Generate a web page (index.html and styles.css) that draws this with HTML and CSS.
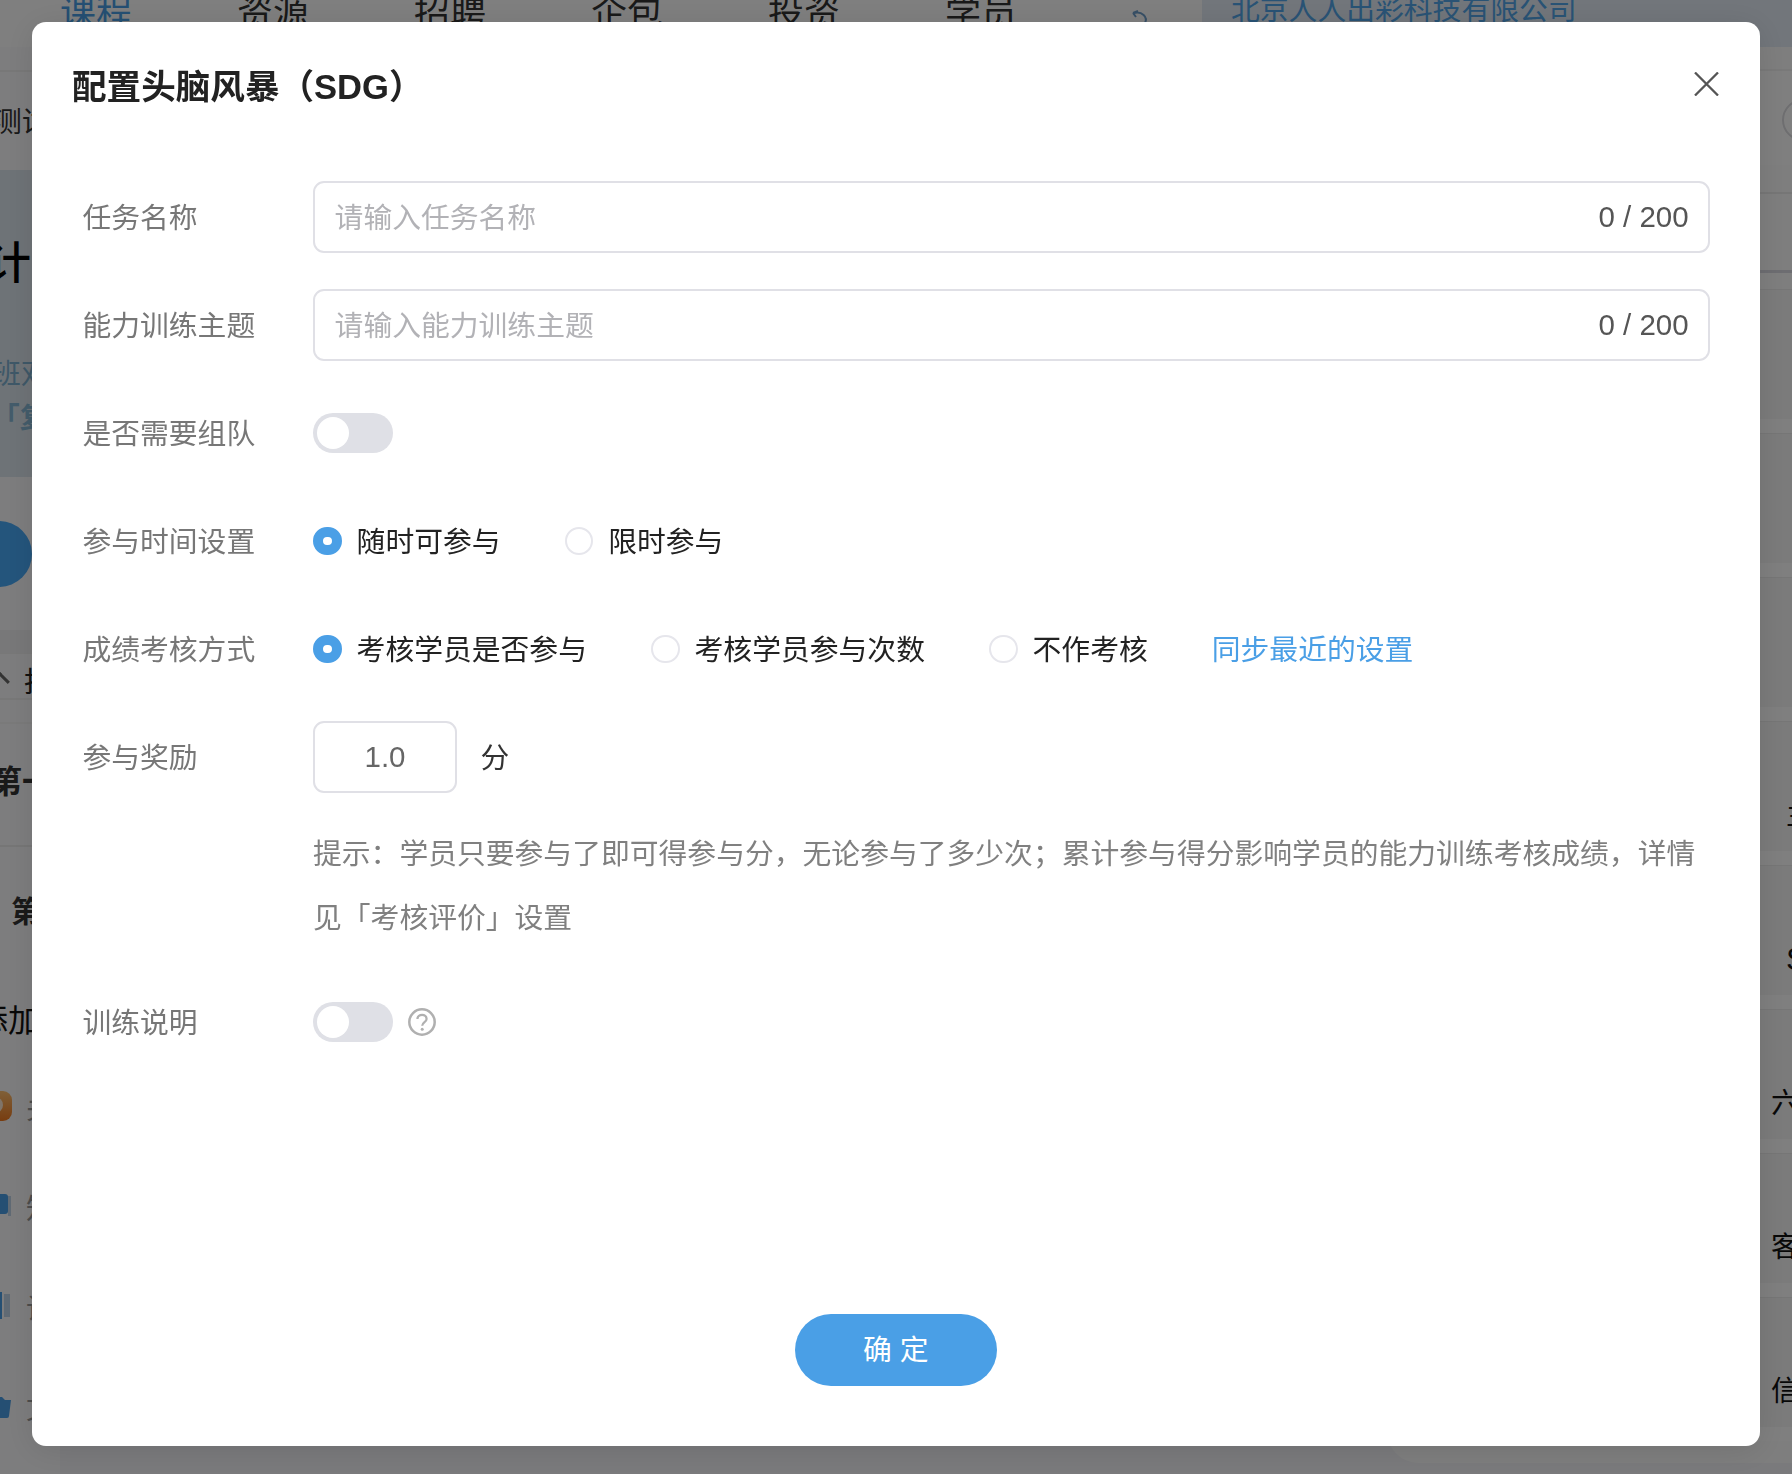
FILE: index.html
```html
<!DOCTYPE html>
<html lang="zh-CN">
<head>
<meta charset="utf-8">
<title>配置头脑风暴（SDG）</title>
<link rel="stylesheet" href="styles.css">
</head>
<body>
<div class="page">
  <header class="topbar">
    <nav class="nav">
      <a class="nav-link active">课程</a>
      <a class="nav-link">资源</a>
      <a class="nav-link">招聘</a>
      <a class="nav-link">企包</a>
      <a class="nav-link">投资</a>
      <a class="nav-link">学员</a>
      <svg class="nav-undo" viewBox="0 0 20 20"><path d="M3 5 L8 3 M3 5 L6 9 M4 5 C12 3 18 9 15 15 C14 17 12 18 10 19" fill="none" stroke="#6f9fcc" stroke-width="2"/></svg>
    </nav>
    <div class="company">北京人人出彩科技有限公司</div>
  </header>
  <main class="main">
    <aside class="left">
      <div class="l-gap"></div>
      <div class="l-test"><span class="l-test-text">测试</span></div>
      <div class="l-hero">
        <div class="l-hero-title">计</div>
        <div class="l-hero-sub">班双</div>
        <div class="l-hero-quote">「复</div>
      </div>
      <div class="l-avatar-wrap"><div class="l-avatar"></div></div>
      <div class="l-band"></div>
      <div class="l-collapse"><span class="l-chev"></span><span class="l-collapse-text">拍</span></div>
      <div class="l-section"><div class="l-first">第一</div></div>
      <div class="l-second">第</div>
      <div class="l-add">添加</div>
      <div class="l-items">
        <div class="l-item"><svg class="l-ico" viewBox="0 0 30 30"><defs><linearGradient id="orange" x1="0" y1="0" x2="0" y2="1"><stop offset="0" stop-color="#ffc070"/><stop offset="1" stop-color="#f07a20"/></linearGradient></defs><rect width="30" height="30" rx="9" fill="url(#orange)"/><circle cx="13" cy="14" r="8" fill="#ffe9d2"/></svg><span class="l-item-text">关</span></div>
        <div class="l-item"><svg class="l-ico" viewBox="0 0 30 30"><rect x="0" y="3" width="26" height="20" rx="3" fill="#4a9fe6"/><rect x="26" y="5" width="3" height="20" fill="#c0d4e8"/></svg><span class="l-item-text">知</span></div>
        <div class="l-item"><svg class="l-ico" viewBox="0 0 30 30"><rect x="0" y="1" width="20" height="27" fill="#4a9fe6"/><rect x="22" y="3" width="6" height="23" fill="#c0d4e8"/></svg><span class="l-item-text">设</span></div>
        <div class="l-item"><svg class="l-ico" viewBox="0 0 30 30"><path d="M0 6 H20 L23 9 H29 L27 25 Q27 27 25 27 H0 Z" fill="#4a9fe6"/></svg><span class="l-item-text">文</span></div>
      </div>
    </aside>
    <aside class="right">
      <div class="r-head"></div>
      <div class="r-profile"><span class="r-ring"></span></div>
      <div class="r-line r-line-a"></div>
      <div class="r-line r-line-b"></div>
      <div class="r-line r-line-c"></div>
      <div class="r-row"></div>
      <div class="r-row"></div>
      <div class="r-row"></div>
      <div class="r-row"><span class="r-text r-text-in">主</span></div>
      <div class="r-row"><span class="r-text r-text-in r-text-s">S</span></div>
      <div class="r-row"><span class="r-text">六</span></div>
      <div class="r-row"><span class="r-text">客</span></div>
      <div class="r-row"><span class="r-text">信</span></div>
    </aside>
  </main>
</div>
<div class="overlay"></div>
<section class="modal">
  <h2 class="modal-title">配置头脑风暴（SDG）</h2>
  <svg class="modal-close" viewBox="0 0 25 24"><path d="M1 0.5 L24 23.5 M24 0.5 L1 23.5" fill="none" stroke="#555" stroke-width="2.3"/></svg>
  <form class="form">
    <div class="row">
      <div class="label">任务名称</div>
      <div class="input"><span class="placeholder">请输入任务名称</span><span class="count">0 / 200</span></div>
    </div>
    <div class="row">
      <div class="label">能力训练主题</div>
      <div class="input"><span class="placeholder">请输入能力训练主题</span><span class="count">0 / 200</span></div>
    </div>
    <div class="row">
      <div class="label">是否需要组队</div>
      <span class="switch"><span class="knob"></span></span>
    </div>
    <div class="row">
      <div class="label">参与时间设置</div>
      <div class="radios">
        <span class="radio checked"><span class="dot"></span><span class="radio-text">随时可参与</span></span>
        <span class="radio"><span class="dot"></span><span class="radio-text">限时参与</span></span>
      </div>
    </div>
    <div class="row">
      <div class="label">成绩考核方式</div>
      <div class="radios">
        <span class="radio checked"><span class="dot"></span><span class="radio-text">考核学员是否参与</span></span>
        <span class="radio"><span class="dot"></span><span class="radio-text">考核学员参与次数</span></span>
        <span class="radio"><span class="dot"></span><span class="radio-text">不作考核</span></span>
        <a class="sync">同步最近的设置</a>
      </div>
    </div>
    <div class="row row-tight">
      <div class="label">参与奖励</div>
      <div class="score">1.0</div>
      <span class="unit">分</span>
    </div>
    <p class="hint">提示：学员只要参与了即可得参与分，无论参与了多少次；累计参与得分影响学员的能力训练考核成绩，详情见「考核评价」设置</p>
    <div class="row">
      <div class="label">训练说明</div>
      <span class="switch"><span class="knob"></span></span>
      <svg class="help" viewBox="0 0 28 28"><circle cx="14" cy="14" r="12.7" fill="none" stroke="#b0b0b0" stroke-width="2.5"/><path d="M9.4 11 C9.6 5.4 18.6 5.4 18.6 11 C18.6 14.2 14.2 14.2 14.2 17.8" fill="none" stroke="#b0b0b0" stroke-width="2.2"/><circle cx="14.2" cy="21.2" r="1.5" fill="#b0b0b0"/></svg>
    </div>
  </form>
  <button class="confirm" type="button">确 定</button>
</section>
</body>
</html>
```
FILE: styles.css
```css
* { box-sizing: border-box; }
html, body { margin: 0; height: 100%; overflow: hidden; }
body {
  font-family: "Liberation Sans", "Noto Sans CJK SC", sans-serif;
  font-size: 28.8px;
  background: #f4f5f8;
  color: #222;
}

/* Background page */
.page { height: 1474px; display: flex; flex-direction: column; overflow: hidden; }
.topbar { height: 47px; flex: none; display: flex; background: #fff; }
.nav { display: flex; gap: 105px; padding-left: 60px; height: 28px; align-items: center; }
.nav-link { font-size: 36px; line-height: 28px; color: #333; white-space: nowrap; }
.nav-link.active { color: #4a9fe6; }
.nav-undo { width: 20px; height: 20px; margin: 8px 0 0 8px; flex: none; align-self: flex-start; }
.company {
  margin-left: auto;
  width: 590px;
  padding-left: 29px;
  background: #e4edf7;
  line-height: 20px;
  color: #52a6ea;
  white-space: nowrap;
}
.main { flex: 1; display: flex; justify-content: space-between; align-items: flex-start; }

.left { width: 60px; height: 1427px; overflow: hidden; background: #fbfbfc; display: flex; flex-direction: column; }
.l-gap { height: 25px; flex: none; border-bottom: 2px solid #f0f0f0; }
.l-test { height: 98px; flex: none; padding-top: 30px; line-height: 40px; color: #333; white-space: nowrap; margin-left: -7px; }
.l-hero { height: 307px; flex: none; padding-top: 69px; background: #dde7ee; display: flex; flex-direction: column; }
.l-hero-title { font-size: 44px; line-height: 50px; font-weight: 500; color: #000; margin-left: -13px; }
.l-hero-sub { margin: 65px 0 0 -8px; line-height: 40px; color: #7db0d0; white-space: nowrap; }
.l-hero-quote { margin: 4px 0 0 -9px; line-height: 40px; font-weight: 700; color: #88b8d6; white-space: nowrap; }
.l-avatar-wrap { height: 153px; flex: none; padding-top: 44px; }
.l-avatar { width: 66px; height: 66px; margin-left: -34px; border-radius: 50%; background: #48aaf8; }
.l-band { height: 23px; flex: none; background: #f0f0f2; }
.l-collapse { height: 47px; flex: none; display: flex; align-items: center; padding-top: 6px; border-top: 1px solid #f0f0f0; border-bottom: 2px solid #f0f0f0; }
.l-chev { width: 14px; height: 14px; margin-left: -7px; border-top: 3px solid #666; border-left: 3px solid #666; transform: rotate(45deg) translate(2px, 2px); flex: none; }
.l-collapse-text { margin-left: 17px; color: #222; }
.l-section { height: 125px; flex: none; padding-top: 38px; border-top: 2px solid #f4f4f4; border-bottom: 2px solid #ededed; margin-top: 22px; }
.l-first { margin-left: -10px; font-size: 32px; line-height: 40px; font-weight: 700; color: #333; white-space: nowrap; }
.l-second { margin: 45px 0 0 11px; font-size: 30px; line-height: 40px; font-weight: 700; color: #333; flex: none; }
.l-add { margin: 67px 0 0 -24px; font-size: 32px; line-height: 44px; color: #111; white-space: nowrap; flex: none; }
.l-items { margin-top: 13px; display: flex; flex-direction: column; }
.l-item { height: 100px; flex: none; display: flex; align-items: center; }
.l-ico { width: 30px; height: 30px; margin-left: -18px; flex: none; }
.l-item-text { margin-left: 14px; color: #999; }

.right { width: 405px; height: 1416px; background: #fdfdfd; border-bottom-left-radius: 32px; overflow: hidden; display: flex; flex-direction: column; }
.r-head { height: 24px; flex: none; border-bottom: 2px solid #f2f2f2; }
.r-profile { height: 94px; flex: none; display: flex; align-items: center; justify-content: flex-end; padding-top: 3px; background: #fff; }
.r-ring { width: 42px; height: 42px; margin-right: -32px; border-radius: 50%; border: 2px solid #dcdce0; flex: none; }
.r-line { flex: none; }
.r-line-a { height: 29px; border-bottom: 2px solid #ececec; }
.r-line-b { height: 79px; border-bottom: 3px solid #dadae2; }
.r-line-c { height: 16px; }
.r-row {
  height: 144px;
  flex: none;
  border-top: 1px solid #ececec;
  background: linear-gradient(#f6f6f6 0 129px, #ffffff 129px);
  padding-top: 77px;
  padding-left: 384px;
  line-height: 32px;
  color: #111;
  white-space: nowrap;
}
.r-text-in { margin-left: 15px; }
.r-text-s { font-size: 32px; }

.overlay { position: fixed; inset: 0; background: rgba(0, 0, 0, 0.5); }

/* Modal */
.modal {
  position: fixed;
  left: 32px;
  top: 22px;
  width: 1728px;
  height: 1424px;
  background: #fff;
  border-radius: 14px;
  box-shadow: 0 4px 32px rgba(0, 0, 0, 0.1);
  padding: 41px 50.4px 60px 49.8px;
  display: flex;
  flex-direction: column;
}
.modal-title {
  margin: 0 0 70px -9.8px;
  font-size: 34.6px;
  line-height: 48px;
  font-weight: 700;
  color: #222;
}
.modal-close { position: absolute; left: 1662px; top: 50px; width: 25px; height: 24px; }
.form { display: flex; flex-direction: column; gap: 36px; }
.row { display: flex; align-items: center; height: 72px; }
.row-tight { margin-bottom: -7px; }
.label { width: 231.2px; flex: none; color: #777; padding: 0 0 4px 0.6px; }
.input {
  flex: 1;
  height: 72px;
  border: 2px solid #e0e0e6;
  border-radius: 11px;
  padding: 0 19px;
  display: flex;
  align-items: center;
  justify-content: space-between;
}
.placeholder { color: #b2b2b6; padding: 0 0 4px 0.6px; }
.count { color: #555; font-size: 29.5px; }
.switch { width: 80px; height: 39.6px; border-radius: 20px; background: #dfe0e6; padding: 3.6px; flex: none; }
.knob { display: block; width: 32.4px; height: 32.4px; border-radius: 50%; background: #fff; }
.radios { display: flex; align-items: center; gap: 64px; }
.radio { display: flex; align-items: center; gap: 14.8px; }
.dot { width: 28.8px; height: 28.8px; border-radius: 50%; border: 2px solid #e6e6ec; background: #fff; flex: none; display: flex; }
.radio.checked .dot { border: 10px solid #4a9fe6; }
.radio-text { color: #222; padding-bottom: 4px; }
.sync { color: #4a9fe6; padding-bottom: 4px; }
.score {
  width: 144px;
  height: 72px;
  border: 2px solid #e0e0e6;
  border-radius: 11px;
  display: flex;
  align-items: center;
  justify-content: center;
  color: #666;
  font-size: 29.5px;
  flex: none;
}
.unit { margin-left: 23.5px; color: #333; padding-bottom: 4px; }
.hint { margin: 0; padding-left: 231.2px; line-height: 64px; color: #808080; }
.help { width: 28px; height: 28px; margin-left: 15px; flex: none; }
.confirm {
  margin: auto auto 0;
  width: 201.6px;
  height: 72px;
  border: 0;
  border-radius: 36px;
  background: #4a9fe6;
  color: #fff;
  font: inherit;
  font-size: 28.8px;
  padding: 0 0 5px;
  flex: none;
}
```
